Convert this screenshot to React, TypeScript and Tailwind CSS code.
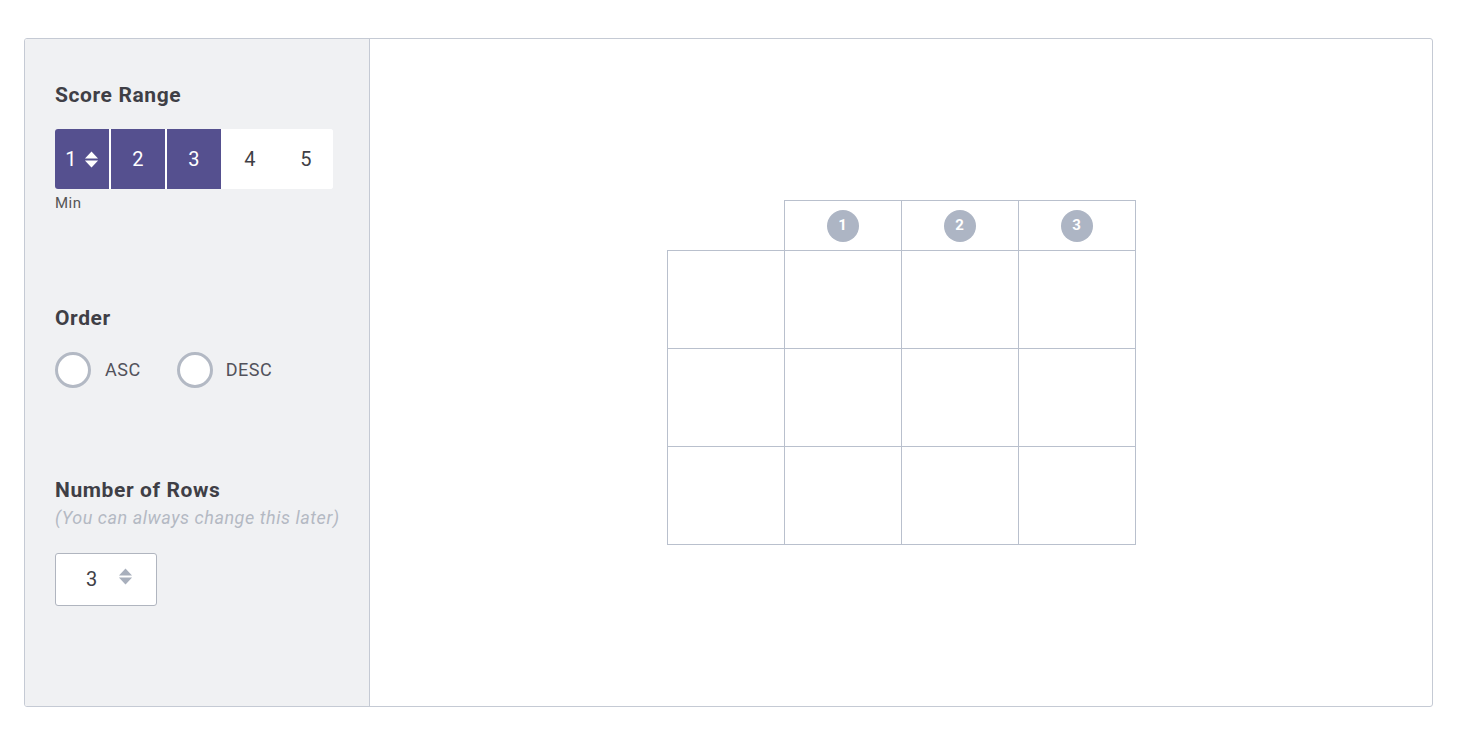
import { useState } from 'react'

const font = { fontFamily: 'Roboto, "Liberation Sans", sans-serif' }

function Badge({ n }: { n: number }) {
  return (
    <div className="w-8 h-8 rounded-full bg-[#adb5c4] text-white text-[15px] font-bold flex items-center justify-center mx-auto">
      {n}
    </div>
  )
}

function Arrows({ className, fill }: { className: string; fill: string }) {
  return (
    <svg className={className} viewBox="0 0 16 20" fill={fill}>
      <path d="M8 1.5 L15 9 H1 Z" />
      <path d="M1 11 H15 L8 18.5 Z" />
    </svg>
  )
}

export default function App() {
  const [order, setOrder] = useState<'asc' | 'desc' | null>(null)
  const [min] = useState(1)
  const [max] = useState(3)
  const scores = [1, 2, 3, 4, 5]
  const rows = 3
  const cols = [1, 2, 3]

  return (
    <div className="w-[1484px] h-[736px] bg-white pt-[38px] pl-[24px]" style={font}>
      <div className="w-[1409px] h-[669px] flex border border-[#c5cad4] rounded-[3px] overflow-hidden">
        {/* Settings */}
        <div className="w-[345px] shrink-0 bg-[#f0f1f3] border-r border-[#c5cad4] pl-[30px] pt-[44px] flex flex-col">
          <h3 className="text-[21px] tracking-[0.6px] font-bold text-[#3f3f46] leading-6">Score Range</h3>
          <div className="mt-[22px] flex w-[278px] h-[60px] bg-white rounded-[3px] overflow-hidden">
            {scores.map((s, i) => {
              const active = s >= min && s <= max
              return (
                <div
                  key={s}
                  className={`flex-1 flex items-center justify-center text-[20px] tracking-[0.5px] ${active ? 'bg-[#55508f] text-white' : 'bg-white text-[#3f3f46]'} ${i > 0 ? 'ml-[2px]' : ''}`}
                >
                  {s}
                  {s === min && <Arrows className="w-[15px] h-[19px] ml-[7px]" fill="currentColor" />}
                </div>
              )
            })}
          </div>
          <span className="mt-[3px] text-[15px] tracking-[0.5px] text-[#555]">Min</span>

          <h3 className="mt-[91px] text-[21px] tracking-[0.6px] font-bold text-[#3f3f46] leading-6">Order</h3>
          <div className="mt-[22px] flex items-center">
            <label className="flex items-center cursor-pointer" onClick={() => setOrder('asc')}>
              <span className="w-[36px] h-[36px] rounded-full border-[3px] border-[#b3b9c4] bg-white flex items-center justify-center">
                {order === 'asc' && <span className="w-3 h-3 rounded-full bg-[#55508f]" />}
              </span>
              <span className="ml-[14px] text-[18px] tracking-[0.5px] text-[#52525b]">ASC</span>
            </label>
            <label className="flex items-center cursor-pointer ml-[36px]" onClick={() => setOrder('desc')}>
              <span className="w-[36px] h-[36px] rounded-full border-[3px] border-[#b3b9c4] bg-white flex items-center justify-center">
                {order === 'desc' && <span className="w-3 h-3 rounded-full bg-[#55508f]" />}
              </span>
              <span className="ml-[13px] text-[18px] tracking-[0.5px] text-[#52525b]">DESC</span>
            </label>
          </div>

          <h3 className="mt-[90px] text-[21px] tracking-[0.6px] font-bold text-[#3f3f46] leading-6">Number of Rows</h3>
          <p className="mt-[4px] text-[18px] tracking-[0.55px] italic text-[#b4b9c3] leading-6">(You can always change this later)</p>
          <div className="mt-[23px] w-[102px] h-[53px] bg-white border border-[#b0b5bf] rounded-[3px] flex items-center pl-[30px]">
            <span className="text-[20px] text-[#3f3f46]">{rows}</span>
            <Arrows className="w-[15px] h-[19px] ml-[21px] -mt-[6px]" fill="#a8afbc" />
          </div>
        </div>

        {/* Preview */}
        <div className="flex-1 flex items-center justify-center">
          <table className="border-collapse">
            <thead>
              <tr>
                <th className="w-[117px] h-[50px] p-0" />
                {cols.map(c => (
                  <th key={c} className="w-[117px] h-[50px] p-0 border border-[#b9c0cd]">
                    <Badge n={c} />
                  </th>
                ))}
              </tr>
            </thead>
            <tbody>
              {Array.from({ length: rows }).map((_, r) => (
                <tr key={r}>
                  <td className="h-[98px] p-0 border border-[#b9c0cd]" />
                  {cols.map(c => (
                    <td key={c} className="h-[98px] p-0 border border-[#b9c0cd]" />
                  ))}
                </tr>
              ))}
            </tbody>
          </table>
        </div>
      </div>
    </div>
  )
}
